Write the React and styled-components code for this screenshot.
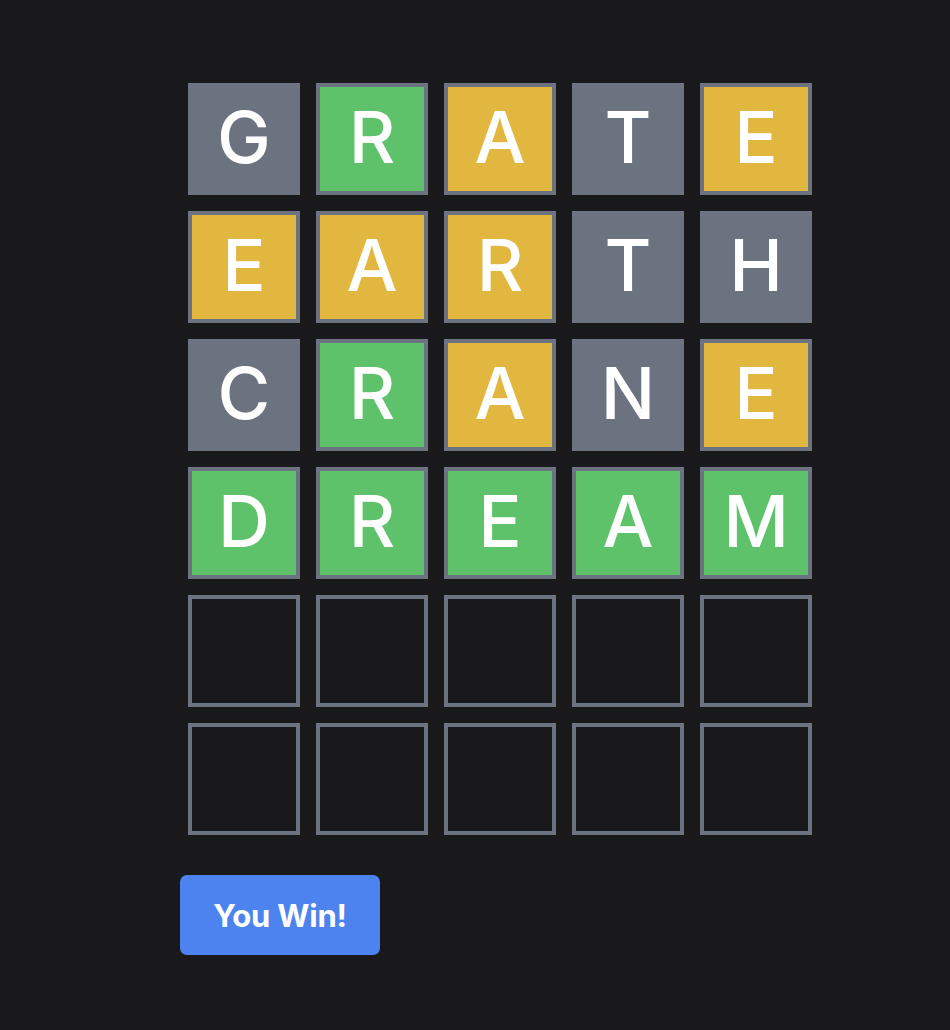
import React from "react";
import styled, { createGlobalStyle } from "styled-components";

const Global = createGlobalStyle`
  html, body { margin: 0; padding: 0; background: #19191b; }
  body { font-family: Inter, "Noto Sans", sans-serif; min-height: 1030px; }
`;

const Page = styled.main`
  padding: 75px 0 0 180px;
  display: flex;
  flex-direction: column;
  align-items: flex-start;
`;

const Board = styled.div`
  width: 640px;
  box-sizing: border-box;
  padding: 8px;
  display: grid;
  grid-template-columns: repeat(5, 112px);
  grid-auto-rows: 112px;
  gap: 16px;
`;

const colors = {
  gray: "#6b7280",
  green: "#5ec26a",
  yellow: "#e2b740",
  empty: "transparent",
};

const Tile = styled.div`
  box-sizing: border-box;
  display: flex;
  align-items: center;
  justify-content: center;
  background: ${(p) => colors[p.$state]};
  border: 4px solid #6b7280;
  color: #fff;
  font-size: 72px;
  font-weight: 500;
  line-height: 1;
  padding-bottom: 4px;
`;

const WinButton = styled.button`
  margin-top: 32px;
  width: 200px;
  height: 80px;
  border: none;
  border-radius: 7px;
  background: #4d83ee;
  color: #fff;
  font-family: Inter, sans-serif;
  font-size: 31px;
  font-weight: 700;
  padding: 0;
  letter-spacing: -0.2px;
`;

const rows = [
  [["G", "gray"], ["R", "green"], ["A", "yellow"], ["T", "gray"], ["E", "yellow"]],
  [["E", "yellow"], ["A", "yellow"], ["R", "yellow"], ["T", "gray"], ["H", "gray"]],
  [["C", "gray"], ["R", "green"], ["A", "yellow"], ["N", "gray"], ["E", "yellow"]],
  [["D", "green"], ["R", "green"], ["E", "green"], ["A", "green"], ["M", "green"]],
  Array(5).fill(["", "empty"]),
  Array(5).fill(["", "empty"]),
];

export default function App() {
  return (
    <>
      <Global />
      <Page>
        <Board>
          {rows.flatMap((row, r) =>
            row.map(([l, s], c) => (
              <Tile key={`${r}-${c}`} $state={s}>
                {l}
              </Tile>
            ))
          )}
        </Board>
        <WinButton>You Win!</WinButton>
      </Page>
    </>
  );
}
